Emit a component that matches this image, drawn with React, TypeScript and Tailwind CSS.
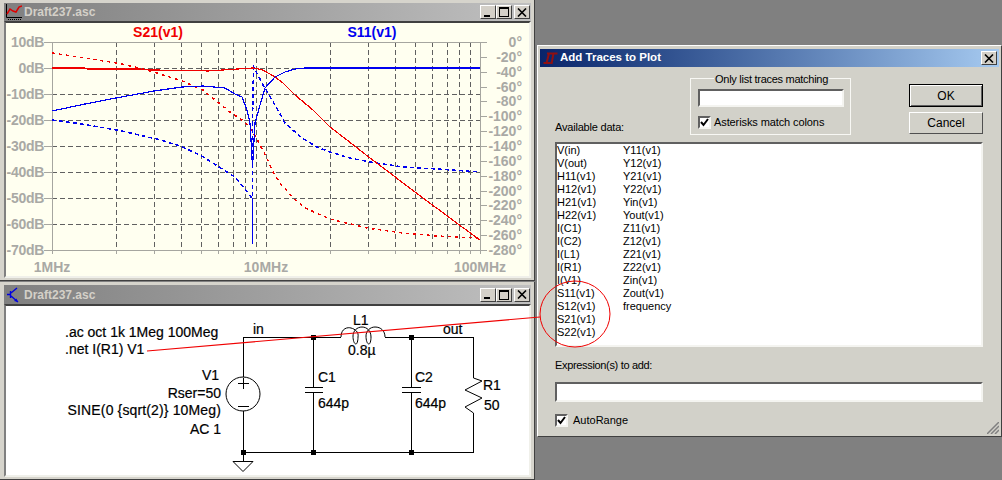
import type { ReactNode } from "react";

const sans = { fontFamily: '"Liberation Sans", Arial, sans-serif' };

const GRID_X = [116, 154, 181, 201, 218, 233, 245, 256, 266, 330, 368, 395, 415, 432, 447, 459, 470];
const GRID_Y = [68, 94, 120, 146, 172, 198, 224];
const LEFT_LABELS = ["10dB", "0dB", "-10dB", "-20dB", "-30dB", "-40dB", "-50dB", "-60dB", "-70dB"];
const RIGHT_LABELS = Array.from({ length: 15 }, (_, i) => `${i === 0 ? "" : "-"}${i * 20}°`);

const RED_SOLID =
  "52,68 85,68 87,69 140,69 150,70 195,70.5 208,71 230,69.5 253,68 263,70 275,77 283,83 295,95 313,110 330,127 347,140 370,158 423,198 477,238 480,240";
const RED_DASH =
  "52,53 117,63 143,69 154,72 182,81 203,90 230,112 245,122 250,128 256,137 260,145 267,158 273,172 280,183 293,198 305,208 330,219 367,228 403,233 437,236 477,238 480,240";
const BLUE_SOLID =
  "52,111 85,104 116,98 154,91 182,87 203,86 225,88 235,94 242,97 247,110 250,123 251,140 252.5,167 254,140 255,123 260,105 265,88 275,77 285,72 295,69 305,68 480,68";
const BLUE_DASH =
  "52,120 75,123 117,130 157,139 180,146 200,155 235,177 245,189 251,197 252.5,198 252.5,123 253.5,67 258,75 263,85 268,93 275,105 285,123 302,138 317,147 330,152 350,158 370,162 403,167 437,169 480,172";

const CloseButton = () => (
  <div className="flex h-[14px] w-[16px] items-center justify-center border border-t-white border-l-white border-r-[#404040] border-b-[#404040] bg-[#d4d0c8]">
    <svg width="10" height="9" viewBox="0 0 10 9" stroke="black" strokeWidth="1.6">
      <path d="M1 .5 L9 8.5 M9 .5 L1 8.5" />
    </svg>
  </div>
);

const WinButtons = () => (
  <div className="flex items-center gap-0">
    {["min", "max"].map((b) => (
      <div key={b} className="flex h-[14px] w-[16px] items-center justify-center border border-t-white border-l-white border-r-[#404040] border-b-[#404040] bg-[#d4d0c8]">
        {b === "min" ? (
          <div className="mt-[7px] mr-[3px] h-[2px] w-[6px] bg-black" />
        ) : (
          <div className="h-[10px] w-[10px] border border-t-2 border-black" />
        )}
      </div>
    ))}
    <div className="ml-[2px]">
      <CloseButton />
    </div>
  </div>
);

const PlotIcon = () => (
  <svg width="16" height="16" viewBox="0 0 16 16" fill="none" className="shrink-0">
    <path d="M.5 0V13.5H16" stroke="black" />
    <path d="M2 15.5H16" stroke="black" strokeDasharray="1 1" />
    <path d="M1 10 L4 5 L7 7 L10 8 L13 3 L16 2" stroke="#e00000" strokeWidth="1.5" />
  </svg>
);

const SchemIcon = () => (
  <svg width="16" height="16" viewBox="0 0 16 16" fill="none" className="shrink-0">
    <path d="M4.5 4V11 M1 7.5H4.5 M5 6 L11 1 M5 9 L12 15" stroke="#0000e0" strokeWidth="1.4" />
    <path d="M12 15 L8 14 L10.5 11.5Z" fill="#0000e0" />
  </svg>
);

const LtIcon = () => (
  <svg width="15" height="13" viewBox="0 0 15 13" fill="none" className="shrink-0">
    <path d="M6 1.5 L3.5 11 H0.5 M3.5 11 H7.5 M4 1.5 H14.5 M10.5 1.5 L8.5 12" stroke="#901010" strokeWidth="2" />
  </svg>
);

const DraftWindow = ({
  className,
  icon,
  titleClass,
  children,
}: {
  className: string;
  icon: ReactNode;
  titleClass: string;
  children: ReactNode;
}) => (
  <div className={`absolute flex flex-col border-r border-b border-[#404040] bg-[#d6d4cc] pt-[3px] pr-[3px] pb-[2px] pl-[4px] ${className}`}>
    <div className={`flex shrink-0 items-center justify-between bg-gradient-to-r from-[#808080] to-[#c0c0c0] pr-[1px] pl-[2px] ${titleClass}`}>
      <div className="flex items-center gap-[2px]">
        {icon}
        <span className="text-[12px] font-bold text-[#d4d0c8]" style={sans}>
          Draft237.asc
        </span>
      </div>
      <WinButtons />
    </div>
    <div className="min-h-0 flex-1 border-2 border-t-[#404040] border-l-[#808080] border-r-[#f0f0ea] border-b-[#f0f0ea]">
      {children}
    </div>
  </div>
);

const Plot = () => (
  <svg viewBox="6 23 523 253" className="block h-full w-full bg-[#fffff0]" style={sans}>
    <g stroke="#606060" strokeDasharray="5 3" shapeRendering="crispEdges">
      {GRID_X.map((x) => (
        <line key={x} x1={x + 0.5} x2={x + 0.5} y1={42} y2={250} />
      ))}
      {GRID_Y.map((y) => (
        <line key={y} x1={52} x2={480} y1={y + 0.5} y2={y + 0.5} />
      ))}
    </g>
    <g stroke="#a6a6a0" shapeRendering="crispEdges">
      <path d="M52.5 42V250 M480.5 42V250 M44 42.5H487 M44 250.5H487" fill="none" />
      {GRID_Y.map((y) => (
        <line key={y} x1={44} x2={52} y1={y + 0.5} y2={y + 0.5} />
      ))}
      {RIGHT_LABELS.map((_, i) => (
        <line key={i} x1={480} x2={487} y1={42.5 + Math.round(i * 14.857)} y2={42.5 + Math.round(i * 14.857)} />
      ))}
      {[52, ...GRID_X, 480].map((x) => (
        <line key={x} x1={x + 0.5} x2={x + 0.5} y1={250} y2={254} />
      ))}
    </g>
    <g fill="none" shapeRendering="crispEdges">
      <polyline points={RED_DASH} stroke="#f00000" strokeWidth="1.5" strokeDasharray="3 4" />
      <polyline points={BLUE_DASH} stroke="#0000f0" strokeWidth="1.5" strokeDasharray="4 3" />
      <line x1="252.5" x2="252.5" y1="198" y2="244" stroke="#0000f0" strokeWidth="1.5" />
      <polyline points={BLUE_SOLID} stroke="#0000f0" strokeWidth="1.2" />
      <polyline points={RED_SOLID} stroke="#f00000" strokeWidth="1.2" />
    </g>
    <g fontSize="14" fontWeight="700" fill="#a9a9a5">
      {LEFT_LABELS.map((t, i) => (
        <text key={t} x={44} y={47 + i * 26} textAnchor="end" letterSpacing="-0.3">
          {t}
        </text>
      ))}
      {RIGHT_LABELS.map((t, i) => (
        <text key={t} x={522} y={47 + i * 14.857} textAnchor="end">
          {t}
        </text>
      ))}
      <text x={52} y={272} textAnchor="middle">1MHz</text>
      <text x={266} y={272} textAnchor="middle">10MHz</text>
      <text x={480} y={272} textAnchor="middle">100MHz</text>
    </g>
    <g fontSize="14" fontWeight="700">
      <text x={158} y={37} textAnchor="middle" fill="#f00000">S21(v1)</text>
      <text x={372} y={37} textAnchor="middle" fill="#0000f0">S11(v1)</text>
    </g>
  </svg>
);

const Schematic = () => (
  <svg viewBox="6 306 523 169" className="block h-full w-full bg-white" style={sans}>
    <g fill="none" stroke="black" shapeRendering="crispEdges">
      <path d="M243.5 377V337.5H341 M385 337.5H473.5V378 M473.5 413V452.5H243.5V411 M243.5 452V462" />
      <path d="M313.5 337V387 M313.5 392V452 M411.5 337V387 M411.5 392V452" />
      <path d="M305 387.5H323 M305 392.5H323 M402 387.5H421 M402 392.5H421" />
    </g>
    <g fill="none" stroke="black">
      <circle cx="243" cy="394" r="17" />
      <path d="M238 383.5H249 M243.5 378V389 M238 406.5H249" />
      <path d="M233 461.5H253L243 471.5Z" />
      <path d="M473.5 378L482 381L465 390L482 398L465 407L473.5 413" />
      <path d="M341 337C341 328 348 327 351 328C355 329 359 332 358 337C358 341 357 344 356 344C354 344 353 340 353 336C353 331 357 327 362 327C367 327 371 331 371 337C371 341 370 344 369 344C367 344 366 340 366 336C366 331 370 327 375 327C381 327 385 331 385 337" />
    </g>
    <g fill="black">
      {[
        [243, 452],
        [313, 337],
        [411, 337],
        [313, 452],
        [411, 452],
      ].map(([x, y]) => (
        <rect key={`${x}-${y}`} x={x - 2} y={y - 2} width="5" height="5" />
      ))}
    </g>
    <g fontSize="14" fill="black" stroke="black" strokeWidth="0.2">
      <text x={65} y={337}>.ac oct 1k 1Meg 100Meg</text>
      <text x={65} y={354}>.net I(R1) V1</text>
      <text x={219} y={380} textAnchor="end">V1</text>
      <text x={221} y={398} textAnchor="end">Rser=50</text>
      <text x={221} y={415} textAnchor="end" letterSpacing="0.14">SINE(0 {"{sqrt(2)}"} 10Meg)</text>
      <text x={221} y={434} textAnchor="end">AC 1</text>
      <text x={253} y={334}>in</text>
      <text x={443} y={334}>out</text>
      <text x={353} y={325}>L1</text>
      <text x={348} y={355}>0.8µ</text>
      <text x={318} y={382}>C1</text>
      <text x={318} y={408}>644p</text>
      <text x={415} y={382}>C2</text>
      <text x={415} y={408}>644p</text>
      <text x={483} y={390}>R1</text>
      <text x={484} y={410}>50</text>
    </g>
  </svg>
);

const CheckBox = () => (
  <div className="flex h-[13px] w-[13px] shrink-0 items-center justify-center border-2 border-t-[#606060] border-l-[#606060] border-r-[#f4f4f0] border-b-[#f4f4f0] bg-white">
    <svg width="9" height="9" viewBox="0 0 9 9" fill="none" stroke="black" strokeWidth="2">
      <path d="M1 4 L3.5 7 L8 1" />
    </svg>
  </div>
);

const COL_A = ["V(in)", "V(out)", "H11(v1)", "H12(v1)", "H21(v1)", "H22(v1)", "I(C1)", "I(C2)", "I(L1)", "I(R1)", "I(V1)", "S11(v1)", "S12(v1)", "S21(v1)", "S22(v1)"];
const COL_B = ["Y11(v1)", "Y12(v1)", "Y21(v1)", "Y22(v1)", "Yin(v1)", "Yout(v1)", "Z11(v1)", "Z12(v1)", "Z21(v1)", "Z22(v1)", "Zin(v1)", "Zout(v1)", "frequency"];

const TraceList = ({ items, className }: { items: string[]; className: string }) => (
  <div className={className}>
    {items.map((t) => (
      <div key={t} className="h-[13px] leading-[13px]">
        {t}
      </div>
    ))}
  </div>
);

const Dialog = () => (
  <div
    className="absolute top-[45px] left-[537px] flex h-[392px] w-[465px] flex-col border border-t-white border-l-white border-r-[#404040] border-b-[#404040] bg-[#d2d1c9] text-[11px] text-black"
    style={sans}
  >
    <div className="mx-[2px] mt-[3px] flex h-[18px] shrink-0 items-center justify-between bg-gradient-to-r from-[#0a246a] to-[#a6caf0] pr-[2px] pl-[3px]">
      <div className="flex items-center gap-[2px]">
        <LtIcon />
        <span className="text-[11.5px] font-bold text-white">Add Traces to Plot</span>
      </div>
      <CloseButton />
    </div>

    <div className="flex min-h-0 flex-1 flex-col pt-[11px] pl-[17px]">
      <div className="flex h-[57px] shrink-0 items-end">
        <div className="w-[135px] tracking-[-0.2px]">Available data:</div>
        <div className="relative h-[57px] w-[161px] border border-[#f8f8f4] px-[7px] pt-[10px]">
          <div className="absolute -top-[8px] left-[23px] bg-[#d2d1c9] px-[1px] tracking-[-0.27px]">Only list traces matching</div>
          <div className="h-[18px] w-[146px] border-2 border-t-[#606060] border-l-[#606060] border-r-[#f4f4f0] border-b-[#f4f4f0] bg-white" />
          <div className="mt-[7px] flex items-center gap-[3px]">
            <CheckBox />
            <span className="tracking-[-0.1px]">Asterisks match colons</span>
          </div>
        </div>
        <div className="ml-[58px] flex w-[74px] flex-col gap-[5px] self-start pt-[6px]">
          <div className="flex h-[23px] items-center justify-center border border-black shadow-[inset_1px_1px_0_#fff,inset_-1px_-1px_0_#606060] text-[12px]">
            OK
          </div>
          <div className="flex h-[22px] items-center justify-center border border-t-white border-l-white border-r-[#505050] border-b-[#505050] text-[12px]">
            Cancel
          </div>
        </div>
      </div>

      <div className="mt-[7px] flex h-[205px] w-[428px] shrink-0 border-2 border-t-[#606060] border-l-[#606060] border-r-[#f4f4f0] border-b-[#f4f4f0] bg-white">
        <TraceList items={COL_A} className="w-[66px]" />
        <TraceList items={COL_B} className="" />
      </div>

      <div className="mt-[12px] h-[13px] leading-[13px] tracking-[-0.33px]">Expression(s) to add:</div>
      <div className="mt-[10px] h-[20px] w-[428px] shrink-0 border-2 border-t-[#606060] border-l-[#606060] border-r-[#f4f4f0] border-b-[#f4f4f0] bg-white" />
      <div className="mt-[10px] flex items-center gap-[5px]">
        <CheckBox />
        <span>AutoRange</span>
      </div>
    </div>

    <svg width="12" height="12" viewBox="0 0 12 12" className="absolute right-[2px] bottom-[2px]" stroke="#808080" strokeWidth="1.5">
      <path d="M0 12L12 0 M4 12L12 4 M8 12L12 8" />
    </svg>
  </div>
);

export default function App() {
  return (
    <div className="relative h-[480px] w-[1002px] overflow-hidden bg-[#808080]">
      <DraftWindow className="top-0 left-0 h-[281px] w-[535px]" icon={<PlotIcon />} titleClass="h-[18px]">
        <Plot />
      </DraftWindow>
      <DraftWindow className="top-[282px] left-0 h-[198px] w-[535px]" icon={<SchemIcon />} titleClass="h-[19px]">
        <Schematic />
      </DraftWindow>
      <Dialog />
      {/* probe wire and the circle around the S traces, drawn over both windows */}
      <svg viewBox="0 0 1002 480" className="pointer-events-none absolute inset-0 h-[480px] w-[1002px]" fill="none" stroke="#f00000">
        <path d="M147 351L540 317" strokeWidth="1.2" />
        <ellipse cx="575" cy="314" rx="35" ry="33" />
      </svg>
    </div>
  );
}
